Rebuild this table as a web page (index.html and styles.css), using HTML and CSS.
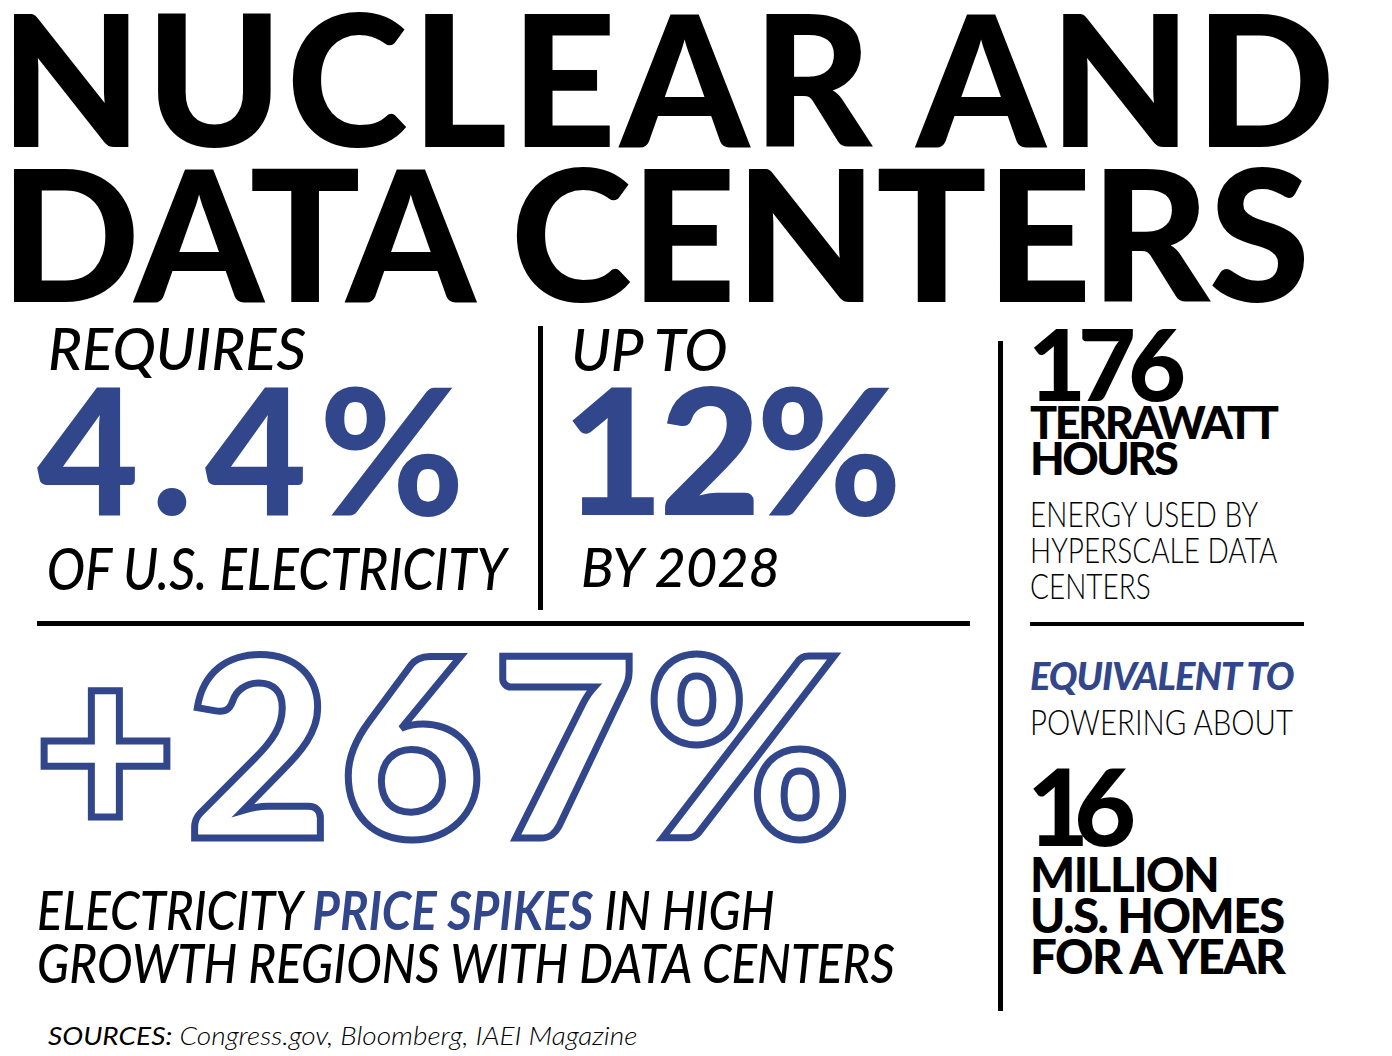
FILE: index.html
```html
<!DOCTYPE html>
<html lang="en">
<head>
<meta charset="utf-8">
<title>Nuclear and Data Centers</title>
<link rel="stylesheet" href="styles.css">
</head>
<body>
<div class="page">
  <h1 class="title"><span class="t1">NUCLEAR AND</span><br><span class="t2">DATA CENTERS</span></h1>
  <div class="main">
    <div class="left">
      <div class="stats">
        <div class="stat stat-a">
          <div class="lead">REQUIRES</div>
          <div class="figure">4.4%</div>
          <div class="trail">OF U.S. ELECTRICITY</div>
        </div>
        <div class="stat stat-b">
          <div class="lead">UP TO</div>
          <div class="figure">12%</div>
          <div class="trail trail-b">BY 2028</div>
        </div>
      </div>
      <div class="rule"></div>
      <div class="outline">+267%</div>
      <p class="desc">ELECTRICITY <span class="accent">PRICE SPIKES</span> IN HIGH<br>GROWTH REGIONS WITH DATA CENTERS</p>
    </div>
    <div class="vdivider"></div>
    <div class="right">
      <div class="num num-176">176</div>
      <div class="unit">TERRAWATT<br>HOURS</div>
      <div class="light light-a">ENERGY USED BY<br>HYPERSCALE DATA<br>CENTERS</div>
      <div class="rule rule-short"></div>
      <div class="equiv">EQUIVALENT TO</div>
      <div class="light light-b">POWERING ABOUT</div>
      <div class="num num-16">16</div>
      <div class="unit unit-lg">MILLION<br>U.S. HOMES<br>FOR A YEAR</div>
    </div>
  </div>
  <footer class="sources"><span class="src-label">SOURCES:</span> Congress.gov, Bloomberg, IAEI Magazine</footer>
</div>
</body>
</html>
```
FILE: styles.css
```css
* { box-sizing: border-box; }
html, body { margin: 0; padding: 0; background: #fff; }
body {
  font-family: "Lato", "Noto Sans", "DejaVu Sans", sans-serif;
  color: #000;
  width: 1392px;
  height: 1056px;
  overflow: hidden;
}
.page { width: 1392px; overflow: hidden; }

.title {
  margin: -2px 0 0 0;
  font-weight: 900;
  font-size: 184px;
  line-height: 155px;
  white-space: nowrap;
}
.t1 { letter-spacing: 3.5px; }
.t2 { letter-spacing: -1.2px; }

.main { display: flex; align-items: flex-start; }
.left { width: 970px; padding-left: 37px; flex: none; }

.stats { display: flex; height: 284px; margin-top: 18px; }
.stat-a { width: 501px; flex: none; }
.stat-b { border-left: 5px solid #000; padding-left: 28px; flex: 1; }

.lead, .trail {
  font-style: italic;
  font-weight: 500;
  font-size: 58px;
  white-space: nowrap;
  transform-origin: 0 50%;
}
.lead { line-height: 43px; padding-left: 11px; }
.figure {
  color: #32468b;
  font-weight: 900;
  font-size: 176px;
  line-height: 156px;
  letter-spacing: 12px;
  white-space: nowrap;
}
.trail { line-height: 85px; padding-left: 11px; transform: scaleX(0.885); }
.stat-b .lead { line-height: 45px; padding-left: 0; }
.stat-b .figure { line-height: 152px; letter-spacing: -5px; margin-left: -9px; }
.trail-b { font-size: 54px; line-height: 87px; padding-left: 10px; transform: none; }

.rule { height: 5px; background: #000; margin-top: 11px; }

.outline {
  font-weight: 900;
  font-size: 250px;
  line-height: 230px;
  letter-spacing: 8px;
  margin-left: -4px;
  color: #fff;
  -webkit-text-stroke: 7px #32468b;
  white-space: nowrap;
}

.desc {
  margin: 27px 0 0 0;
  width: max-content;
  font-style: italic;
  font-weight: 500;
  font-size: 54px;
  line-height: 53px;
  white-space: nowrap;
  transform: scaleX(0.88);
  transform-origin: 0 50%;
}
.accent { color: #32468b; font-weight: 700; }

.vdivider { width: 5px; height: 670px; background: #000; margin: 33px 0 0 28px; flex: none; }

.right { margin-left: 27px; padding-top: 12px; flex: 1; }
.num { font-weight: 900; white-space: nowrap; }
.num-176 { font-size: 100px; line-height: 85px; letter-spacing: -8px; margin-left: -2px; }
.unit { font-weight: 900; font-size: 45px; line-height: 35.5px; letter-spacing: -2.5px; white-space: nowrap; }
.light {
  font-weight: 300;
  font-size: 35px;
  line-height: 36px;
  white-space: nowrap;
  transform-origin: 0 50%;
}
.light-a { margin-top: 19px; transform: scaleX(0.8); }
.rule-short { width: 274px; height: 4px; margin-top: 18.5px; }
.equiv {
  margin-top: 30px;
  color: #32468b;
  font-style: italic;
  font-weight: 900;
  font-size: 38px;
  line-height: 38px;
  letter-spacing: -1px;
  white-space: nowrap;
}
.light-b { margin-top: 9px; transform: scaleX(0.84); }
.num-16 { font-size: 107px; line-height: 97px; margin-top: 17.5px; letter-spacing: -15px; margin-left: -3px; }
.unit-lg { font-size: 47.5px; line-height: 41px; letter-spacing: -1.5px; }

.sources {
  margin: 9px 0 0 48px;
  width: max-content;
  font-style: italic;
  font-weight: 300;
  font-size: 25.5px;
  line-height: 30px;
  white-space: nowrap;
  transform: scaleX(1.1);
  transform-origin: 0 50%;
}
.src-label { font-weight: 400; }
```
